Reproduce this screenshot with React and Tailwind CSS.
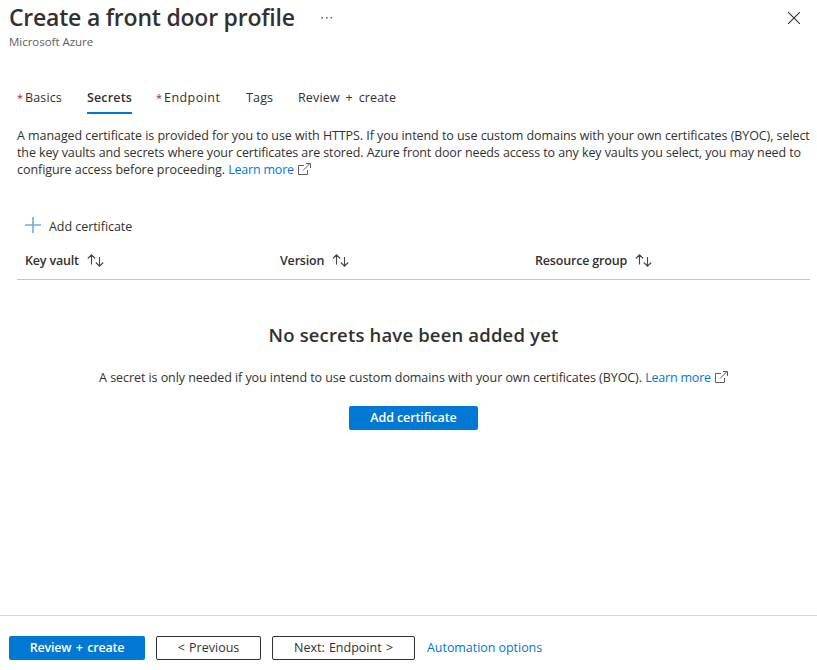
import React from "react";

function ExternalIcon() {
  return (
    <svg width="13" height="12" viewBox="0 0 13 12" fill="none" stroke="#605e5c" strokeWidth="1" className="ml-1 inline-block align-[-0.5px]">
      <path d="M6 2.5H.5v9h9V7M5 7.5l7-7M8 .5h4.5V5" />
    </svg>
  );
}

function SortIcon() {
  return (
    <svg width="17" height="13" viewBox="0 0 17 13" fill="none" stroke="#484644" strokeWidth="1.1" className="ml-2 shrink-0">
      <path d="M4.5 10.5V.8M.8 4.5L4.5.8l3.7 3.7M12.5 3v9.2M8.8 8.5l3.7 3.7 3.7-3.7" />
    </svg>
  );
}

function Required() {
  return <span className="w-2 text-[11px] text-[#a4262c]">*</span>;
}

function Column({ children }) {
  return (
    <div className="flex w-[255px] items-center whitespace-nowrap text-[12.5px] font-semibold tracking-[-0.18px]">
      {children}
      <SortIcon />
    </div>
  );
}

export default function App() {
  return (
    <div className="flex h-[670px] w-[817px] flex-col overflow-hidden bg-white font-['Open_Sans',sans-serif] text-[12.5px] leading-[17px] text-[#323130]">
      <header className="flex h-[51px] justify-between pl-[9px] pr-[17px]">
        <div className="whitespace-nowrap">
          <div className="flex h-[34px] items-center">
            <h1 className="w-[286px] text-[23px] font-semibold leading-[34px] tracking-[-0.22px]">Create a front door profile</h1>
            <svg width="12" height="2" viewBox="0 0 12 2" fill="#605e5c" className="ml-[26px] mt-0.5">
              <path d="M.4 0h1.5v1.6H.4zM5 0h1.5v1.6H5zM9.6 0h1.5v1.6H9.6z" />
            </svg>
          </div>
          <p className="text-[11.5px] leading-[16px] tracking-[-0.03px] text-[#605e5c]">Microsoft Azure</p>
        </div>
        <svg width="12" height="12" viewBox="0 0 12 12" stroke="#323130" strokeWidth="1.1" className="mt-3">
          <path d="M0 0l12 12M12 0L0 12" />
        </svg>
      </header>

      <nav className="flex h-[63px] items-end whitespace-nowrap pl-[17px] tracking-[0.15px]">
        <div className="flex h-[25px] w-[70px]"><Required />Basics</div>
        <div className="mr-6 h-[25px] w-[45px] border-b-2 border-[#0078d4] font-semibold">Secrets</div>
        <div className="flex h-[25px] w-[90px] tracking-[0.45px]"><Required />Endpoint</div>
        <div className="h-[25px] w-[52px]">Tags</div>
        <div className="h-[25px] [word-spacing:2.4px]">Review + create</div>
      </nav>

      <main className="flex grow flex-col pl-[17px] pr-[7px] pt-[13px]">
        <p className="whitespace-nowrap">
          <span className="block tracking-[-0.084px] [word-spacing:0.1px]">A managed certificate is provided for you to use with HTTPS. If you intend to use custom domains with your own certificates (BYOC), select</span>
          <span className="block tracking-[-0.12px] [word-spacing:0.1px]">the key vaults and secrets where your certificates are stored. Azure front door needs access to any key vaults you select, you may need to</span>
          <span className="block tracking-[-0.06px]">configure access before proceeding. <a className="tracking-[-0.2px] text-[#0078d4]">Learn more</a><ExternalIcon /></span>
        </p>

        <button className="mt-[39px] flex h-[18px] items-center gap-2 pl-2 tracking-[-0.05px]">
          <svg width="16" height="16" viewBox="0 0 16 16" stroke="#69afe5" strokeWidth="1.6" className="-mt-0.5">
            <path d="M8 0v16M0 8h16" />
          </svg>
          Add certificate
        </button>

        <div className="mt-[9px] flex h-[36px] items-center border-b border-[#c8c6c4] pb-0.5 pl-2">
          <Column>Key vault</Column>
          <Column>Version</Column>
          <Column>Resource group</Column>
        </div>

        <section className="flex flex-col items-center whitespace-nowrap">
          <h2 className="mt-[41px] text-[18.5px] font-semibold leading-[28px] tracking-[0.16px]">No secrets have been added yet</h2>
          <p className="mt-[20px] tracking-[-0.065px]">
            A secret is only needed if you intend to use custom domains with your own certificates (BYOC). <a className="tracking-[-0.2px] text-[#0078d4]">Learn more</a><ExternalIcon />
          </p>
          <button className="mt-5 h-6 w-[129px] rounded-[2px] bg-[#0078d4] pb-0.5 font-semibold tracking-[-0.1px] text-white">Add certificate</button>
        </section>
      </main>

      <footer className="flex h-[55px] items-start whitespace-nowrap border-t border-[#d6d6d6] pl-[9px] pt-5">
        <button className="h-6 w-[136px] rounded-[2px] bg-[#0078d4] pb-0.5 font-semibold tracking-[-0.2px] text-white [word-spacing:1.5px]">Review + create</button>
        <button className="ml-[11px] h-6 w-[105px] rounded-[2px] border border-[#323130] pb-0.5 [word-spacing:1px]">&lt; Previous</button>
        <button className="ml-[11px] h-6 w-[143px] rounded-[2px] border border-[#323130] pb-0.5 [word-spacing:1px]">Next: Endpoint &gt;</button>
        <a className="ml-3 leading-6 tracking-[-0.05px] text-[#0078d4]">Automation options</a>
      </footer>
    </div>
  );
}
